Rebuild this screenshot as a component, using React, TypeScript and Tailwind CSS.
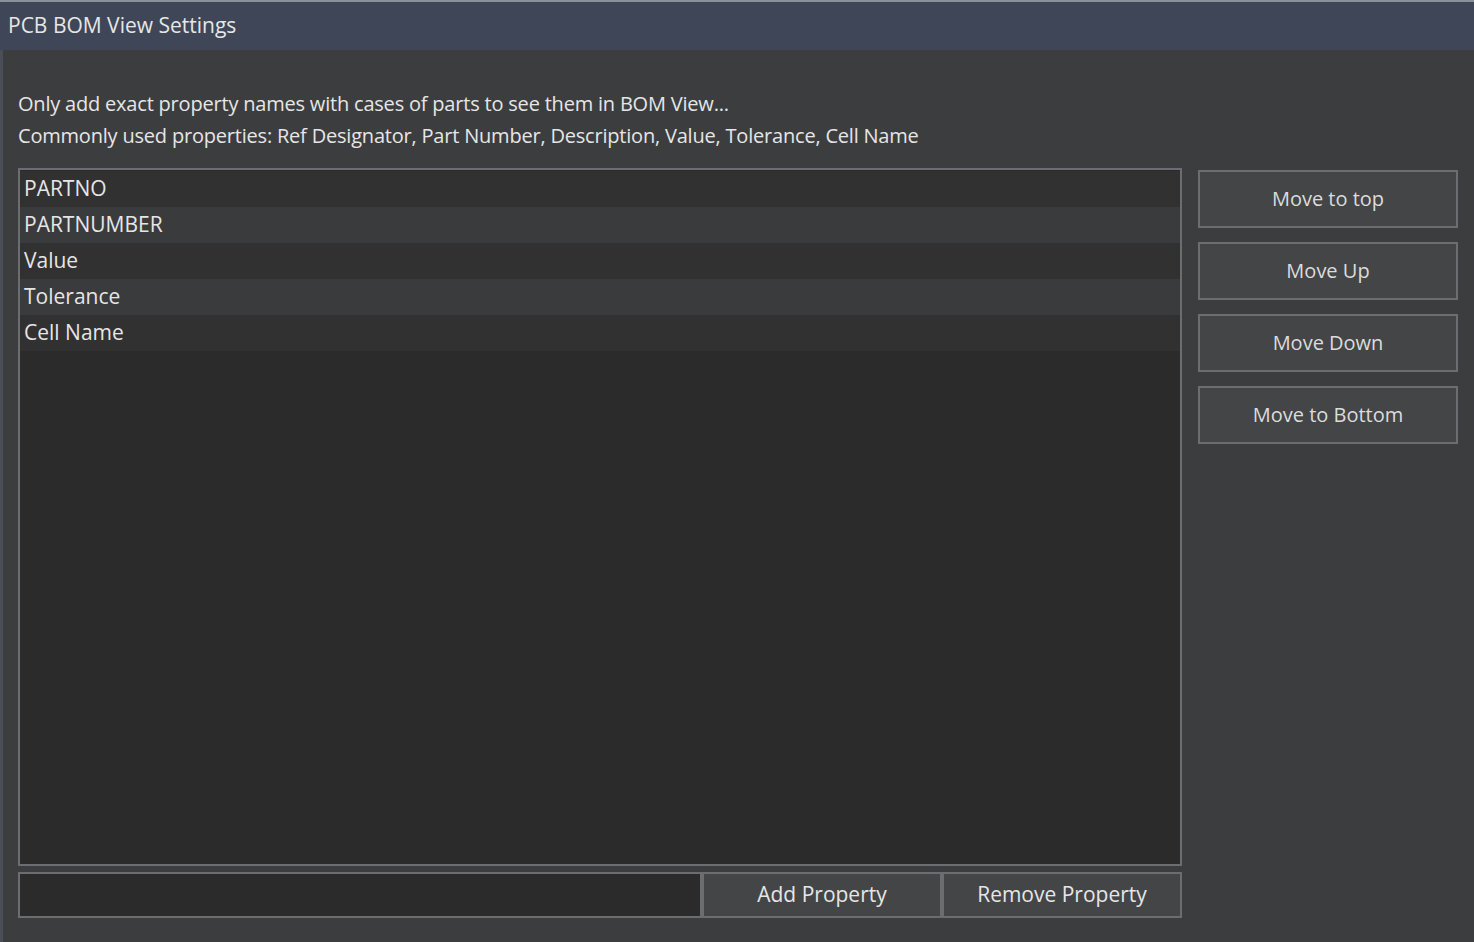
const items = ["PARTNO", "PARTNUMBER", "Value", "Tolerance", "Cell Name"];
const sideButtons = ["Move to top", "Move Up", "Move Down", "Move to Bottom"];

export default function App() {
  return (
    <div
      className="w-[1474px] h-[942px] flex flex-col bg-[#3c3d3f] text-[#e6e6e6] overflow-hidden"
      style={{ fontFamily: '"Open Sans", "Noto Sans", sans-serif' }}
    >
      {/* title bar */}
      <div className="h-[50px] shrink-0 bg-[#3e4657] border-t-2 border-[#8a909c] flex items-center px-[8px] text-[21px]">
        PCB BOM View Settings
      </div>

      <div className="flex-1 flex flex-col border-l-[3px] border-[#4a4e58] pl-[15px] pr-[16px] pt-[38px] pb-[24px]">
        <div className="text-[20px] leading-[32px] tracking-[-0.2px]">
          <div>Only add exact property names with cases of parts to see them in BOM View...</div>
          <div>Commonly used properties: Ref Designator, Part Number, Description, Value, Tolerance, Cell Name</div>
        </div>

        <div className="flex-1 flex gap-[16px] mt-[16px]">
          <div className="w-[1164px] flex flex-col">
            <div className="flex-1 border-2 border-[#6b6d70] bg-[#2b2b2b] pt-[1px]">
              {items.map((t, i) => (
                <div
                  key={t}
                  className={`h-[36px] flex items-center px-[4px] text-[21px] ${
                    i % 2 === 0 ? "bg-[#313131]" : "bg-[#3a3b3c]"
                  }`}
                >
                  {t}
                </div>
              ))}
            </div>
            <div className="h-[46px] mt-[6px] flex">
              <div className="w-[684px] border-2 border-[#6b6d70] bg-[#2b2b2b]" />
              <button className="w-[240px] border-2 border-[#6b6d70] bg-[#434547] text-[21px]">Add Property</button>
              <button className="w-[240px] border-2 border-[#6b6d70] bg-[#434547] text-[21px]">Remove Property</button>
            </div>
          </div>

          <div className="w-[260px] flex flex-col gap-[14px] pt-[2px]">
            {sideButtons.map((b) => (
              <button
                key={b}
                className="h-[58px] border-2 border-[#6b6d70] bg-[#434547] text-[20px] text-[#dcdcdc]"
              >
                {b}
              </button>
            ))}
          </div>
        </div>
      </div>
    </div>
  );
}
